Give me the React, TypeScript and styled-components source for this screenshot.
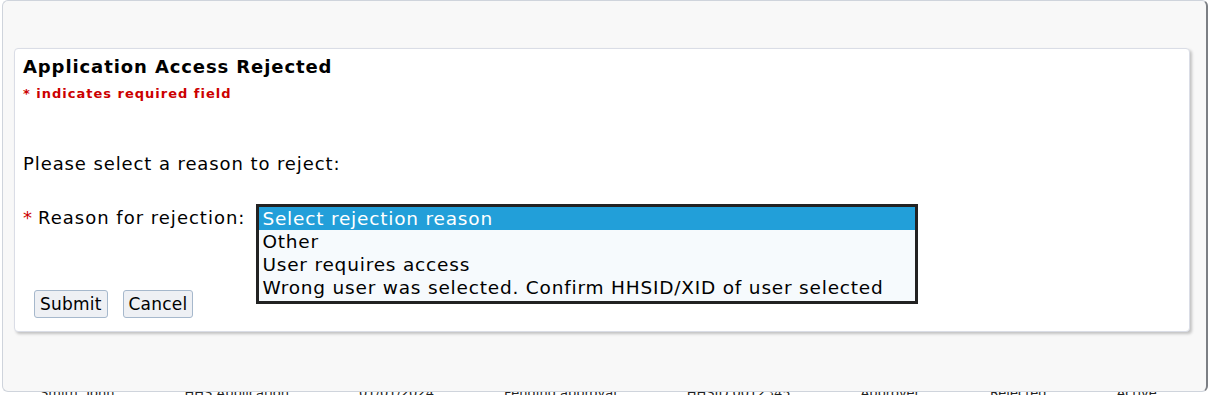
import React from "react";
import styled, { createGlobalStyle } from "styled-components";

const Global = createGlobalStyle`
  html, body {
    margin: 0;
    padding: 0;
    background: #ffffff;
    font-family: "DejaVu Sans", Verdana, sans-serif;
    overflow: hidden;
  }
`;

const Backdrop = styled('div')`
  position: relative;
  width: 1212px;
  height: 395px;
  display: flex;
  align-items: flex-end;
  overflow: hidden;
`;

const BehindRow = styled('div')`
  display: flex;
  gap: 70px;
  padding-left: 40px;
  height: 4px;
  overflow: hidden;
  font-size: 13px;
  line-height: 13px;
  color: #222;
  white-space: nowrap;
  align-items: flex-start;
  span {
    margin-top: -5px;
  }
`;

const Dialog = styled('div')`
  position: absolute;
  top: 0;
  left: 2px;
  width: 1206px;
  height: 392px;
  box-sizing: border-box;
  background: #f8f8f8;
  border: 1px solid #cfd4dc;
  border-right: 2px solid #7c7f84;
  border-radius: 6px;
  padding: 47px 16px 0 11px;
`;

const Card = styled('div')`
  background: #fff;
  border: 1px solid #dadde6;
  border-radius: 4px;
  box-shadow: 2px 2px 3px rgba(0, 0, 0, 0.22);
  padding: 5px 8px 13px 8px;
`;

const Title = styled('h2')`
  margin: 0;
  font-size: 18px;
  letter-spacing: 0.9px;
  font-weight: bold;
  color: #000;
  line-height: 26px;
`;

const Required = styled('div')`
  color: #cc0000;
  font-size: 13px;
  letter-spacing: 1px;
  font-weight: bold;
  line-height: 18px;
  margin-top: 5px;
`;

const Prompt = styled('p')`
  margin: 50px 0 0 0;
  font-size: 18px;
  letter-spacing: 0.9px;
  line-height: 22px;
  color: #000;
`;

const FormRow = styled('div')`
  display: flex;
  align-items: flex-start;
  margin-top: 29px;
`;

const LeftCol = styled('div')`
  display: flex;
  flex-direction: column;
`;

const Label = styled('label')`
  font-size: 18px;
  letter-spacing: 1px;
  line-height: 22px;
  padding-top: 3px;
  color: #000;
  margin-right: 11px;
`;

const Star = styled('span')`
  color: #cc0000;
  margin-right: 5px;
`;

const Buttons = styled('div')`
  display: flex;
  gap: 15px;
  margin-top: 61px;
  padding-left: 11px;
`;

const Button = styled('button')`
  font-family: "DejaVu Sans", Verdana, sans-serif;
  font-size: 17px;
  letter-spacing: 0.2px;
  color: #000;
  background: #eef0f4;
  border: 1px solid #a6b8cc;
  border-radius: 3px;
  height: 28px;
  padding: 0 5px;
  cursor: pointer;
`;

const List = styled('div')`
  width: 662px;
  box-sizing: border-box;
  border: 3px solid #222;
  background: #f6fafd;
  padding-bottom: 2px;
`;

const Option = styled('div')<{ $selected?: boolean }>`
  font-size: 18.5px;
  letter-spacing: 0.8px;
  line-height: 23px;
  padding-left: 3px;
  white-space: nowrap;
  color: ${(p) => (p.$selected ? "#fff" : "#000")};
  background: ${(p) => (p.$selected ? "#229fd9" : "transparent")};
`;

const reasons = [
  "Select rejection reason",
  "Other",
  "User requires access",
  "Wrong user was selected. Confirm HHSID/XID of user selected",
];

export default function App() {
  return (
    <>
      <Global />
      <Backdrop>
        <BehindRow>
          <span>Smith, John</span>
          <span>HHS Application</span>
          <span>01/01/2024</span>
          <span>Pending approval</span>
          <span>HHSID 0012345</span>
          <span>Approver</span>
          <span>Rejected</span>
          <span>Active</span>
          <span>Details</span>
          <span>Review</span>
        </BehindRow>
        <Dialog>
          <Card>
            <Title>Application Access Rejected</Title>
            <Required>* indicates required field</Required>
            <Prompt>Please select a reason to reject:</Prompt>
            <FormRow>
              <LeftCol>
                <Label>
                  <Star>*</Star>Reason for rejection:
                </Label>
                <Buttons>
                  <Button>Submit</Button>
                  <Button>Cancel</Button>
                </Buttons>
              </LeftCol>
              <List role="listbox">
                {reasons.map((r, i) => (
                  <Option key={r} $selected={i === 0}>
                    {r}
                  </Option>
                ))}
              </List>
            </FormRow>
          </Card>
        </Dialog>
      </Backdrop>
    </>
  );
}
